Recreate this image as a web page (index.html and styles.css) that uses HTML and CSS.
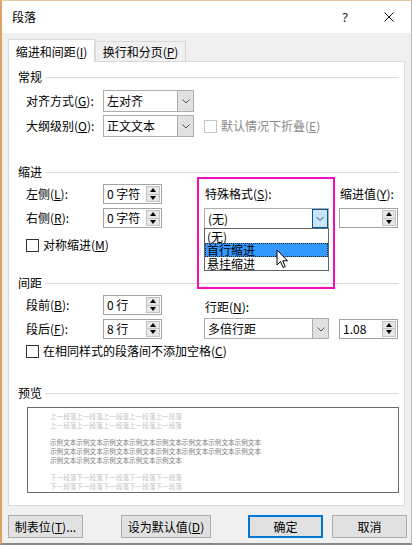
FILE: index.html
```html
<!DOCTYPE html>
<html>
<head>
<meta charset="UTF-8">
<link rel="stylesheet" href="styles.css">
</head>
<body>
<div class="window">
	<div class="titlebar">
		<span class="title">段落</span>
		<span class="tb-btn help">?</span>
		<span class="tb-btn close">
			<svg width="10" height="10" viewBox="0 0 10 10"><path d="M0.5 0.5 L9.5 9.5 M9.5 0.5 L0.5 9.5" stroke="#111" stroke-width="1" fill="none"/></svg>
		</span>
	</div>

	<div class="tabs">
		<div class="tab active">缩进和间距(<u>I</u>)</div>
		<div class="tab">换行和分页(<u>P</u>)</div>
	</div>

	<div class="panel">
		<div class="sec-head first"><span>常规</span><i class="rule"></i></div>
		<div class="row r22 gap5">
			<span class="lbl">对齐方式(<u>G</u>):</span>
			<div class="combo w91"><span class="text">左对齐</span><span class="drop"><svg width="14" height="20"><path d="M3.5 8.5 L7 12 L10.5 8.5" stroke="#555" fill="none"/></svg></span></div>
		</div>
		<div class="row r22 gap3">
			<span class="lbl">大纲级别(<u>O</u>):</span>
			<div class="combo w91"><span class="text">正文文本</span><span class="drop"><svg width="14" height="20"><path d="M3.5 8.5 L7 12 L10.5 8.5" stroke="#555" fill="none"/></svg></span></div>
			<span class="cb disabled"></span><span class="dim">默认情况下折叠(<u>E</u>)</span>
		</div>

		<div class="sec-head gap27"><span>缩进</span><i class="rule"></i></div>
		<div class="row r20 gap4">
			<span class="lbl">左侧(<u>L</u>):</span>
			<div class="spin"><span class="val">0 字符</span><span class="arrows"><span class="up"></span><span class="dn"></span></span></div>
			<span class="c3 pad1">特殊格式(<u>S</u>):</span>
			<span class="c4 pad1">缩进值(<u>Y</u>):</span>
		</div>
		<div class="row r20 gap4">
			<span class="lbl">右侧(<u>R</u>):</span>
			<div class="spin"><span class="val">0 字符</span><span class="arrows"><span class="up"></span><span class="dn"></span></span></div>
			<div class="c3 holder">
				<div class="combo open"><span class="text">(无)</span><span class="drop"><svg width="14" height="19"><path d="M3.5 8 L7 11.5 L10.5 8" stroke="#1b4f7a" fill="none"/></svg></span></div>
				<div class="list">
					<div class="item">(无)</div>
					<div class="item sel">首行缩进</div>
					<div class="item">悬挂缩进</div>
				</div>
			</div>
			<div class="c4 spin"><span class="val"></span><span class="arrows"><span class="up"></span><span class="dn"></span></span></div>
		</div>
		<div class="row r14 gap10">
			<span class="cb"></span><span>对称缩进(<u>M</u>)</span>
		</div>

		<div class="sec-head gap23"><span>间距</span><i class="rule"></i></div>
		<div class="row r20 gap4">
			<span class="lbl">段前(<u>B</u>):</span>
			<div class="spin"><span class="val">0 行</span><span class="arrows"><span class="up"></span><span class="dn"></span></span></div>
			<span class="c3 pad1 low">行距(<u>N</u>):</span>
		</div>
		<div class="row r21 gap3">
			<span class="lbl">段后(<u>F</u>):</span>
			<div class="spin"><span class="val">8 行</span><span class="arrows"><span class="up"></span><span class="dn"></span></span></div>
			<div class="c3 combo"><span class="text">多倍行距</span><span class="drop"><svg width="14" height="20"><path d="M3.5 8.5 L7 12 L10.5 8.5" stroke="#555" fill="none"/></svg></span></div>
			<div class="c4 spin"><span class="val">1.08</span><span class="arrows"><span class="up"></span><span class="dn"></span></span></div>
		</div>
		<div class="row r14 gap5">
			<span class="cb"></span><span>在相同样式的段落间不添加空格(<u>C</u>)</span>
		</div>

		<div class="sec-head gap27"><span>预览</span><i class="rule"></i></div>
		<div class="preview">
			<div class="prev">上一段落上一段落上一段落上一段落上一段落<br>上一段落上一段落上一段落上一段落上一段落</div>
			<div class="sample">示例文本示例文本示例文本示例文本示例文本示例文本示例文本示例文本<br>示例文本示例文本示例文本示例文本示例文本示例文本示例文本示例文本<br>示例文本示例文本示例文本示例文本示例文本</div>
			<div class="next">下一段落下一段落下一段落下一段落下一段落<br>下一段落下一段落下一段落下一段落下一段落</div>
		</div>
	</div>

	<div class="footer">
		<span class="button w75">制表位(<u>T</u>)...</span>
		<span class="button w90 ml38">设为默认值(<u>D</u>)</span>
		<span class="button w75 ml37 default">确定</span>
		<span class="button w75 ml9">取消</span>
	</div>

	<div class="mark"></div>
	<svg class="cursor" width="13" height="21" viewBox="0 0 13 21">
		<path d="M1 1 L1 16 L4.5 12.5 L7 18.5 L9.2 17.6 L6.8 11.8 L11.5 11.8 Z" fill="#fff" stroke="#000" stroke-width="1" stroke-linejoin="round"/>
	</svg>
</div>
</body>
</html>
```

FILE: styles.css
```css
* {
	box-sizing: border-box;
	margin: 0;
	padding: 0;
}
body {
	font-family: "Noto Sans CJK SC", "Noto Sans", sans-serif;
	font-size: 12px;
	color: #000;
	background: #f0f0f0;
}
u {
	text-decoration: underline;
	text-underline-offset: 1px;
}

.window {
	position: relative;
	width: 412px;
	height: 545px;
	background: #f0f0f0;
	border-left: 2px solid #dfa462;
	border-top: 1px solid #e8c79e;
	border-right: 1px solid #b8b8b8;
	border-bottom: 2px solid #8a8a8a;
	overflow: hidden;
}

/* title bar */
.titlebar {
	height: 32px;
	background: #fff;
	display: flex;
	align-items: center;
	padding-left: 10px;
}
.title {
	line-height: 16px;
}
.tb-btn {
	width: 44px;
	height: 32px;
	display: flex;
	align-items: center;
	justify-content: center;
}
.help {
	margin-left: auto;
	font-family: "Noto Sans", sans-serif;
	font-size: 13px;
	color: #222;
}

/* tabs */
.tabs {
	display: flex;
	align-items: flex-start;
	height: 22px;
	margin: 6px 0 0 6px;
}
.tab {
	position: relative;
	width: 91px;
	height: 20px;
	margin-top: 2px;
	border: 1px solid #d9d9d9;
	border-bottom: 0;
	background: #f0f0f0;
	text-align: center;
	line-height: 19px;
}
.tab.active {
	z-index: 1;
	width: 87px;
	height: 23px;
	margin-top: 0;
	background: #fff;
	line-height: 24px;
}

.panel {
	width: 397px;
	height: 445px;
	margin-left: 6px;
	border: 1px solid #d9d9d9;
	background: #fff;
}

/* section headings */
.sec-head {
	display: flex;
	align-items: center;
	height: 16px;
	margin: 0 5px 0 9px;
	line-height: 16px;
}
.sec-head.first { margin-top: 7px; }
.rule {
	flex: 1;
	height: 1px;
	margin-left: 3px;
	background: #dcdcdc;
}
.gap3 { margin-top: 3px; }
.gap4 { margin-top: 4px; }
.gap5 { margin-top: 5px; }
.gap10 { margin-top: 10px; }
.gap23 { margin-top: 23px; }
.gap27 { margin-top: 27px; }

/* rows */
.row {
	display: flex;
	align-items: center;
	padding-left: 17px;
	line-height: 16px;
}
.r14 { height: 14px; }
.r20 { height: 20px; }
.r21 { height: 21px; }
.r22 { height: 22px; }
.lbl {
	width: 77px;
	flex: none;
}
.c3 {
	width: 125px;
	margin-left: 42px;
	flex: none;
}
.c4 {
	width: 59px;
	margin-left: 10px;
	flex: none;
}
.pad1 { padding-left: 1px; }
.low { margin-top: 4px; }
.dim { color: #8a8a8a; }

/* combo box */
.combo {
	display: flex;
	height: 22px;
	border: 1px solid #adadad;
	background: #fff;
}
.w91 { width: 91px; }
.r21 .combo, .holder .combo { height: 21px; }
.combo .text {
	flex: 1;
	padding-left: 3px;
	line-height: 19px;
}
.combo .drop {
	width: 16px;
	display: flex;
	align-items: center;
	justify-content: center;
	background: #e1e1e1;
	border-left: 1px solid #adadad;
}
.combo.open .drop {
	background: #cce4f7;
	box-shadow: inset 0 0 0 1px #005499;
	border-left: 0;
}

.holder {
	position: relative;
}
.list {
	position: absolute;
	z-index: 2;
	top: 20px;
	left: 0;
	width: 125px;
	height: 43px;
	padding-top: 1px;
	border: 1px solid #646464;
	background: #fff;
}
.item {
	height: 13.5px;
	padding-left: 2px;
	line-height: 13.5px;
}
.item.sel {
	background: #3399ff;
	outline: 1px dotted #222;
	outline-offset: -1px;
}

/* spinner */
.spin {
	display: flex;
	width: 59px;
	height: 20px;
	border: 1px solid #a3a3a3;
	background: #fff;
	flex: none;
}
.spin .val {
	flex: 1;
	padding-left: 3px;
	line-height: 18px;
}
.arrows {
	width: 14px;
	margin: 1px 1px 1px 0;
	display: flex;
	flex-direction: column;
	background: #e6e6e6;
	border: 1px solid #c2c2c2;
}
.arrows span {
	flex: 1;
	display: flex;
	align-items: center;
	justify-content: center;
}
.arrows span + span {
	border-top: 1px solid #c2c2c2;
}
.up::before {
	content: "";
	border: 3px solid transparent;
	border-top: 0;
	border-bottom: 4px solid #000;
}
.dn::before {
	content: "";
	border: 3px solid transparent;
	border-bottom: 0;
	border-top: 4px solid #000;
}

/* checkbox */
.cb {
	width: 13px;
	height: 13px;
	margin-right: 4px;
	border: 1px solid #333;
	background: #fff;
	flex: none;
}
.cb.disabled {
	margin-left: 10px;
	border-color: #c4c4c4;
}

/* preview */
.preview {
	width: 372px;
	height: 86px;
	margin: 6px 0 0 18px;
	padding: 4px 0 0 22px;
	border: 1px solid #6b6b6b;
	overflow: hidden;
	font-size: 6.6px;
	line-height: 9px;
	white-space: nowrap;
}
.prev, .next { color: #c4c4c4; }
.sample {
	margin-top: 8px;
	color: #7a7a7a;
}
.next { margin-top: 8px; }

/* footer buttons */
.footer {
	display: flex;
	margin: 9px 0 0 6px;
}
.button {
	height: 23px;
	border: 1px solid #adadad;
	background: #e1e1e1;
	text-align: center;
	line-height: 21px;
}
.button.default {
	border: 2px solid #0078d7;
	line-height: 19px;
}
.w75 { width: 75px; }
.w90 { width: 90px; }
.ml9 { margin-left: 9px; }
.ml37 { margin-left: 37px; }
.ml38 { margin-left: 38px; }

/* annotation overlay */
.mark {
	position: absolute;
	left: 195px;
	top: 176px;
	width: 138px;
	height: 112px;
	border: 2px solid #f20cc0;
	z-index: 3;
}
.cursor {
	position: absolute;
	left: 274px;
	top: 248px;
	z-index: 4;
}
```
